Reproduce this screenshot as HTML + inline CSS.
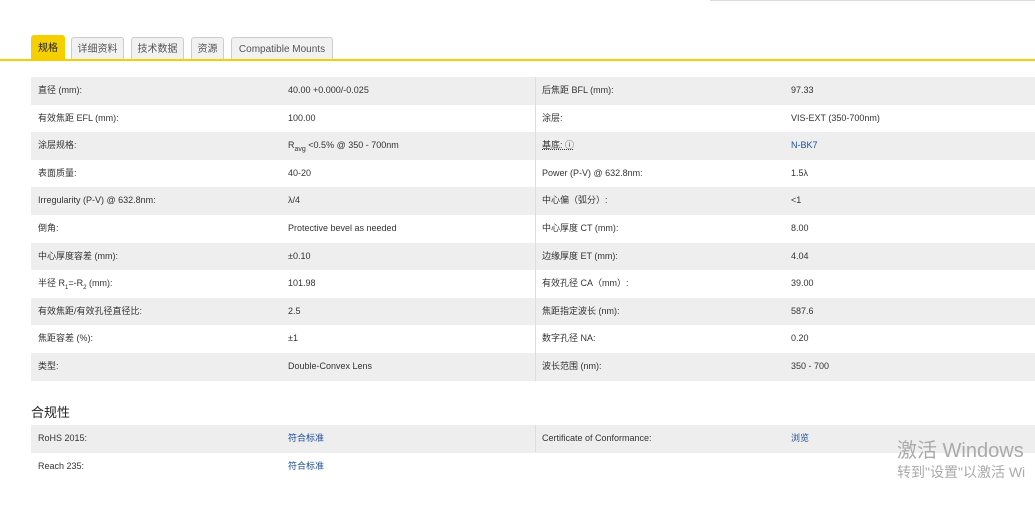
<!DOCTYPE html>
<html><head><meta charset="utf-8"><style>
body{margin:0;width:1035px;height:506px;overflow:hidden;background:#fff;font-family:"Liberation Sans","Noto Sans CJK SC",sans-serif;color:#222;position:relative}
.topline{position:absolute;left:710px;top:0;width:325px;height:1px;background:#ddd}
.tab{position:absolute;top:37px;height:22px;line-height:23px;font-size:10px;color:#555;background:#f1f1f1;border:1px solid #ccc;border-bottom:none;border-radius:3px 3px 0 0;padding:0;text-align:center;white-space:nowrap;box-sizing:border-box}
.tab.act{background:#f5cf00;border-color:#f5cf00;color:#222;top:35px;height:25px;line-height:26px}
.yl{position:absolute;left:0;top:59px;width:1035px;height:2px;background:#f5d000}
.row{position:absolute;left:31px;width:1004px;height:27.6px;font-size:9px;line-height:27.6px;color:#333}
.row.g{background:#eee}
.row span{position:absolute;top:0;white-space:nowrap}
.c1{left:7px}.c2{left:257px}.c3{left:511px}.c4{left:760px}
.div{position:absolute;left:535px;top:77px;width:1px;height:304px;background:#ddd}
.blue{color:#1f4e99}
h3{position:absolute;left:31px;top:402px;margin:0;font-size:13px;font-weight:normal;color:#222}
.wm{position:absolute;left:897px;color:#aaa;white-space:nowrap}
</style></head><body>
<div class="topline"></div>
<div class="tab act" style="left:31px;width:34px">规格</div>
<div class="tab" style="left:71px;width:53px">详细资料</div>
<div class="tab" style="left:131px;width:53px">技术数据</div>
<div class="tab" style="left:191px;width:33px">资源</div>
<div class="tab" style="left:231px;width:102px">Compatible Mounts</div>
<div class="yl"></div>

<div class="row g" style="top:77px"><span class="c1">直径 (mm):</span><span class="c2">40.00 +0.000/-0.025</span><span class="c3">后焦距 BFL (mm):</span><span class="c4">97.33</span></div>
<div class="row" style="top:104.6px"><span class="c1">有效焦距 EFL (mm):</span><span class="c2">100.00</span><span class="c3">涂层:</span><span class="c4">VIS-EXT (350-700nm)</span></div>
<div class="row g" style="top:132.2px"><span class="c1">涂层规格:</span><span class="c2">R<sub style="font-size:7px">avg</sub> &lt;0.5% @ 350 - 700nm</span><span class="c3" style="text-decoration:underline dotted">基底: ⓘ</span><span class="c4 blue">N-BK7</span></div>
<div class="row" style="top:159.8px"><span class="c1">表面质量:</span><span class="c2">40-20</span><span class="c3">Power (P-V) @ 632.8nm:</span><span class="c4">1.5λ</span></div>
<div class="row g" style="top:187.4px"><span class="c1">Irregularity (P-V) @ 632.8nm:</span><span class="c2">λ/4</span><span class="c3">中心偏（弧分）:</span><span class="c4">&lt;1</span></div>
<div class="row" style="top:215px"><span class="c1">倒角:</span><span class="c2">Protective bevel as needed</span><span class="c3">中心厚度 CT (mm):</span><span class="c4">8.00</span></div>
<div class="row g" style="top:242.6px"><span class="c1">中心厚度容差 (mm):</span><span class="c2">±0.10</span><span class="c3">边缘厚度 ET (mm):</span><span class="c4">4.04</span></div>
<div class="row" style="top:270.2px"><span class="c1">半径 R<sub style="font-size:6px">1</sub>=-R<sub style="font-size:6px">2</sub> (mm):</span><span class="c2">101.98</span><span class="c3">有效孔径 CA（mm）:</span><span class="c4">39.00</span></div>
<div class="row g" style="top:297.8px"><span class="c1">有效焦距/有效孔径直径比:</span><span class="c2">2.5</span><span class="c3">焦距指定波长 (nm):</span><span class="c4">587.6</span></div>
<div class="row" style="top:325.4px"><span class="c1">焦距容差 (%):</span><span class="c2">±1</span><span class="c3">数字孔径 NA:</span><span class="c4">0.20</span></div>
<div class="row g" style="top:353px"><span class="c1">类型:</span><span class="c2">Double-Convex Lens</span><span class="c3">波长范围 (nm):</span><span class="c4">350 - 700</span></div>
<div class="div"></div>

<h3>合规性</h3>
<div class="row g" style="top:425px"><span class="c1">RoHS 2015:</span><span class="c2 blue">符合标准</span><span class="c3">Certificate of Conformance:</span><span class="c4 blue">浏览</span></div>
<div class="row" style="top:452.6px"><span class="c1">Reach 235:</span><span class="c2 blue">符合标准</span></div>
<div style="position:absolute;left:535px;top:425px;width:1px;height:27px;background:#ddd"></div>
<div class="wm" style="top:434px;font-size:20px">激活 Windows</div>
<div class="wm" style="top:462px;font-size:14px">转到"设置"以激活 Wi</div>
</body></html>
